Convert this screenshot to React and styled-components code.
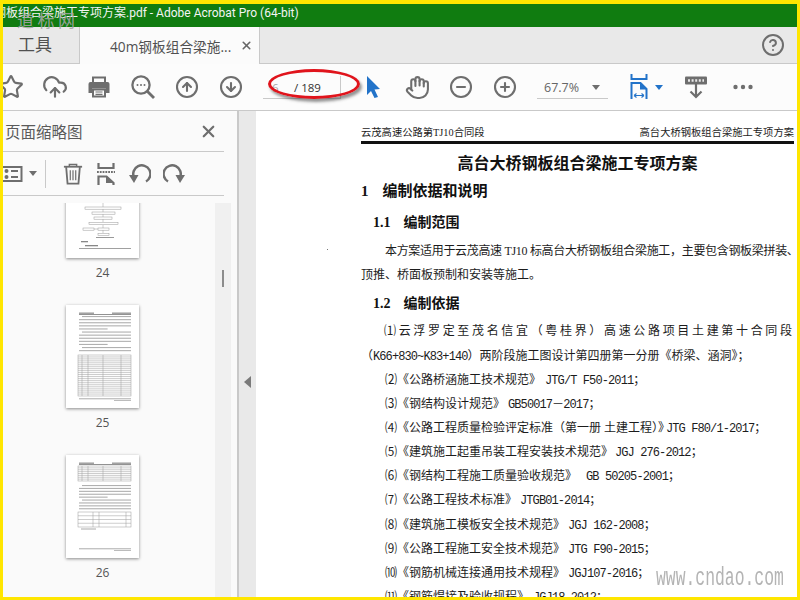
import styled, { createGlobalStyle } from "styled-components";
import {
  CircleArrowDown,
  CircleArrowUp,
  CircleHelp,
  CircleMinus,
  CirclePlus,
  CloudUpload,
  Hand,
  Star,
  X,
} from "lucide-react";

const uiFont = `"Open Sans", "Noto Sans CJK SC", sans-serif`;
const docFont = `"Liberation Serif", "Noto Sans CJK SC", serif`;
const iconGray = "#6e6e6e";
const iconBlue = "#2273c9";
const lineGray = "#c9c9c9";

const GlobalStyle = createGlobalStyle`
  html, body {
    margin: 0;
    padding: 0;
    width: 800px;
    height: 600px;
    overflow: hidden;
    background: #ffe600;
  }
`;

const Frame = styled.div`
  position: relative;
  box-sizing: border-box;
  width: 800px;
  height: 600px;
  border: solid #ffe600;
  border-width: 4px 3px 3px 3px;
  display: flex;
  flex-direction: column;
  overflow: hidden;
  font-family: ${uiFont};
  background: #fff;
`;

const TitleBar = styled.div`
  flex: 0 0 23px;
  background: #107c10;
  color: #f4f4f4;
  font-family: Roboto, "Noto Sans CJK SC", sans-serif;
  font-size: 12px;
  line-height: 18px;
  white-space: nowrap;
  overflow: hidden;
  span {
    margin-left: -9px;
    display: inline-block;
  }
`;

const TabBar = styled.div`
  flex: 0 0 37px;
  box-sizing: border-box;
  background: #e9e9e9;
  border-bottom: 1px solid ${lineGray};
  display: flex;
  align-items: stretch;
`;

const Tab = styled.div`
  box-sizing: border-box;
  width: ${(p) => p.$width}px;
  margin-bottom: ${(p) => (p.$active ? "-1px" : "0")};
  padding-left: ${(p) => p.$pad}px;
  padding-bottom: ${(p) => (p.$active ? "0" : "3px")};
  background: ${(p) => (p.$active ? "#fbfbfb" : "#e9e9e9")};
  border-right: 1px solid ${lineGray};
  color: #505050;
  font-size: ${(p) => (p.$active ? "13.7px" : "17px")};
  display: flex;
  align-items: center;
  white-space: nowrap;
`;

const TabClose = styled.span`
  display: flex;
  margin-left: 9px;
  color: #666;
`;

const HelpButton = styled.div`
  margin-left: auto;
  margin-right: 12px;
  display: flex;
  align-items: center;
  color: ${iconGray};
`;

const Toolbar = styled.div`
  flex: 0 0 46px;
  background: #fcfcfc;
  display: flex;
  align-items: center;
  margin-left: -14px;
`;

const ToolCell = styled.div`
  flex: 0 0 ${(p) => p.$width || 44}px;
  margin-left: ${(p) => p.$left || 0}px;
  height: 46px;
  display: flex;
  align-items: center;
  justify-content: center;
  color: ${(p) => (p.$blue ? iconBlue : iconGray)};
`;

const PageBox = styled.div`
  box-sizing: border-box;
  flex: 0 0 78px;
  margin-left: 10px;
  height: 23px;
  margin-top: 1px;
  border-bottom: 1px solid ${lineGray};
  border-right: 1px solid ${lineGray};
  padding-left: 9px;
  display: flex;
  align-items: center;
  font-size: 11.5px;
  color: #333;
  white-space: nowrap;
`;

const PageCurrent = styled.span`
  color: #a8a8a8;
  width: 22px;
`;

const ZoomBox = styled.div`
  box-sizing: border-box;
  flex: 0 0 71px;
  margin-left: 10px;
  height: 23px;
  margin-top: 1px;
  border-bottom: 1px solid ${lineGray};
  padding: 0 8px 0 7px;
  display: flex;
  align-items: center;
  justify-content: space-between;
  font-size: 12.5px;
  color: #666;
`;

const Caret = styled.span`
  width: 0;
  height: 0;
  border-left: 4px solid transparent;
  border-right: 4px solid transparent;
  border-top: 5px solid ${(p) => (p.$blue ? iconBlue : iconGray)};
  flex: none;
`;

const Workspace = styled.div`
  flex: 1;
  min-height: 0;
  display: flex;
  border-top: 1px solid ${lineGray};
`;

const Sidebar = styled.aside`
  flex: 0 0 234px;
  background: #fafafa;
  display: flex;
  flex-direction: column;
  min-height: 0;
  overflow: hidden;
`;

const PanelHead = styled.div`
  flex: 0 0 41px;
  width: 221px;
  border-bottom: 1px solid ${lineGray};
  display: flex;
  align-items: center;
  justify-content: space-between;
  color: #5a5a5a;
  font-size: 15.5px;
  white-space: nowrap;
  padding: 0 6px 0 2px;
  box-sizing: border-box;
`;

const PanelClose = styled.span`
  display: flex;
  color: ${iconGray};
`;

const PanelTools = styled.div`
  flex: 0 0 44px;
  box-sizing: border-box;
  width: 221px;
  border-bottom: 1px solid ${lineGray};
  display: flex;
  align-items: center;
  color: ${iconGray};
`;

const PanelDivider = styled.span`
  width: 1px;
  height: 28px;
  background: ${lineGray};
  margin: 0 17px 0 8px;
`;

const PanelTool = styled.span`
  display: flex;
  margin-right: ${(p) => p.$gap || 0}px;
`;

const ThumbArea = styled.div`
  flex: 1;
  min-height: 0;
  margin-top: 7px;
  display: flex;
  overflow: hidden;
`;

const ThumbList = styled.div`
  flex: 0 0 212px;
  box-sizing: border-box;
  margin-top: -48px;
  padding-right: 13px;
  display: flex;
  flex-direction: column;
  align-items: center;
`;

const Thumb = styled.figure`
  flex: none;
  margin: 0 0 13px;
  height: 137px;
  display: flex;
  flex-direction: column;
  align-items: center;
  svg {
    background: #fff;
    box-shadow: 0 1px 3px rgba(0, 0, 0, 0.45);
  }
  svg > * {
    filter: blur(0.4px);
  }
  figcaption {
    margin-top: 7px;
    font-size: 12px;
    line-height: 15px;
    color: #555;
  }
`;

const ScrollTrack = styled.div`
  width: 16px;
  background: #f0f0f0;
  display: flex;
  justify-content: center;
  padding-top: 67px;
`;

const ScrollThumb = styled.div`
  width: 2px;
  height: 17px;
  background: #8c8c8c;
`;

const Splitter = styled.div`
  box-sizing: border-box;
  flex: 0 0 19px;
  background: #e9e9e9;
  border-left: 2px solid ${lineGray};
  display: flex;
  align-items: center;
  padding-left: 5px;
  span {
    width: 0;
    height: 0;
    margin-top: 56px;
    border-top: 6px solid transparent;
    border-bottom: 6px solid transparent;
    border-right: 7px solid #7a7a7a;
  }
`;

const Document = styled.main`
  flex: 1;
  min-width: 0;
  background: #fff;
  padding: 15px 3px 0 105px;
  overflow: hidden;
  color: #1c1c1c;
  font-family: ${docFont};
`;

const DocHeader = styled.div`
  display: flex;
  justify-content: space-between;
  font-size: 10.3px;
  line-height: 14px;
  padding-bottom: 1px;
  border-bottom: 3px solid #111;
`;

const DocTitle = styled.h1`
  margin: 9px 0 0;
  font-size: 16px;
  line-height: 22px;
  text-align: center;
  color: #111;
`;

const SectionTitle = styled.h2`
  margin: ${(p) => p.$top}px 0 0 ${(p) => p.$indent}px;
  font-size: ${(p) => p.$size}px;
  line-height: 20px;
  display: flex;
  gap: ${(p) => p.$gap}px;
  color: #111;
`;

const Para = styled.p`
  margin: ${(p) => p.$top || 0}px 0 0;
  font-size: 12px;
  line-height: 25px;
  height: ${(p) => p.$height || 25}px;
  white-space: nowrap;
  text-indent: ${(p) => p.$indent || 0}px;
  letter-spacing: ${(p) => p.$spacing || 0}px;
`;

const JustifiedPara = styled(Para)`
  white-space: normal;
  text-align: justify;
  text-align-last: justify;
`;

const Code = styled.span`
  font-family: "Liberation Mono", "Noto Sans CJK SC", monospace;
  font-size: 12px;
  letter-spacing: -0.9px;
  line-height: 1;
  margin-left: ${(p) => p.$gap || 0}px;
`;

const RefList = styled.div`
  margin-top: -0.5px;
`;

const RefRow = styled.div`
  font-size: 12px;
  line-height: 24.1px;
  height: 24.1px;
  white-space: pre;
  padding-left: 24px;
`;

const RedEllipse = styled.div`
  position: absolute;
  left: 265px;
  top: 65px;
  width: 86px;
  height: 24px;
  border-radius: 50%;
  border: 3px solid #e0141c;
  box-shadow: 2px 3px 3px rgba(60, 60, 60, 0.55);
  pointer-events: none;
`;

const TopMark = styled.div`
  position: absolute;
  left: 14px;
  top: 8px;
  font-family: ${docFont};
  font-size: 17px;
  line-height: 20px;
  letter-spacing: 3.5px;
  color: rgba(165, 165, 165, 0.9);
`;

const BottomMark = styled.div`
  position: absolute;
  left: 653px;
  top: 564px;
  font-family: "Liberation Mono", monospace;
  font-size: 16.4px;
  line-height: 22px;
  color: #b4b4b4;
  transform: scaleY(1.55);
`;

const Speck = styled.span`
  position: absolute;
  left: 324px;
  top: 245px;
  width: 1px;
  height: 1px;
  background: #777;
`;

const CursorIcon = () => (
  <svg width="16" height="24" viewBox="0 0 16 24">
    <path d="M2 1 L15 14 L9.5 14.5 L13 22 L9.5 23 L6 16 L2 20 Z" fill={iconBlue} />
  </svg>
);

const PrinterIcon = () => (
  <svg width="24" height="24" viewBox="0 0 24 24" fill="none">
    <path d="M6 2.5 H18 V8 H6 Z" stroke={iconGray} strokeWidth="2" />
    <path
      d="M3.5 7 H20.5 A2 2 0 0 1 22.5 9 V18 H19 V13.5 H5 V18 H1.5 V9 A2 2 0 0 1 3.5 7 Z"
      fill={iconGray}
    />
    <path d="M6 14.5 H18 V21.5 H6 Z" stroke={iconGray} strokeWidth="2" />
    <path d="M8.5 17 H15.5 M8.5 19.3 H15.5" stroke={iconGray} strokeWidth="1.2" />
  </svg>
);

const SearchDotsIcon = () => (
  <svg width="26" height="26" viewBox="0 0 26 26" fill="none" stroke={iconGray}>
    <circle cx="11" cy="11" r="8.6" strokeWidth="2.3" />
    <path d="M17 17 L24 24" strokeWidth="2.8" />
    <circle cx="7.5" cy="11" r="1" fill={iconGray} stroke="none" />
    <circle cx="11" cy="11" r="1" fill={iconGray} stroke="none" />
    <circle cx="14.5" cy="11" r="1" fill={iconGray} stroke="none" />
  </svg>
);

const FitWidthIcon = () => (
  <svg width="18" height="26" viewBox="0 0 18 26" fill="none">
    <path d="M1.5 0 V5 H16.5 V0" stroke={iconBlue} strokeWidth="2" />
    <path d="M1.5 25 V9 H10.5 L16.5 15 V25" stroke={iconBlue} strokeWidth="2" />
    <path d="M10 9 L10 15.5 H16.5 Z" fill={iconBlue} />
    <path
      d="M4 21.5 H14 M4 21.5 L6.5 19.5 M4 21.5 L6.5 23.5 M14 21.5 L11.5 19.5 M14 21.5 L11.5 23.5"
      stroke={iconBlue}
      strokeWidth="1.1"
    />
  </svg>
);

const KeyboardDownIcon = () => (
  <svg width="24" height="24" viewBox="0 0 24 24" fill="none">
    <rect x="1" y="1.5" width="22" height="8" rx="1" fill={iconGray} />
    <path d="M4 5.5 H20" stroke="#e8e8e8" strokeWidth="2.4" strokeDasharray="2 1.6" />
    <path d="M12 9 V22 M6.5 16.5 L12 22 L17.5 16.5" stroke={iconGray} strokeWidth="2.2" />
  </svg>
);

const DotsIcon = () => (
  <svg width="20" height="6" viewBox="0 0 20 6" fill={iconGray}>
    <circle cx="2.5" cy="3" r="2.2" />
    <circle cx="10" cy="3" r="2.2" />
    <circle cx="17.5" cy="3" r="2.2" />
  </svg>
);

const ListIcon = () => (
  <svg width="20" height="18" viewBox="0 0 20 18" fill="none">
    <path d="M0 2 H18.5 V16 H0" stroke={iconGray} strokeWidth="2" />
    <circle cx="3.5" cy="6" r="2" fill={iconGray} />
    <circle cx="3.5" cy="12" r="2" fill={iconGray} />
    <path d="M8 6 H15 M8 12 H15" stroke={iconGray} strokeWidth="2" />
  </svg>
);

const TrashIcon = () => (
  <svg width="20" height="24" viewBox="0 0 22 24" fill="none" stroke={iconGray}>
    <path d="M1 4 H21" strokeWidth="2" />
    <path d="M7 4 V1.5 H15 V4" strokeWidth="1.6" />
    <path d="M3.5 4.5 L5 22.5 H17 L18.5 4.5" strokeWidth="2" />
    <path d="M8 8 V19 M11 8 V19 M14 8 V19" strokeWidth="1.3" />
  </svg>
);

const CutPageIcon = () => (
  <svg width="18" height="22" viewBox="0 0 18 22" fill="none">
    <path d="M1.5 0 V5 H16.5 V0" stroke={iconGray} strokeWidth="2.2" />
    <path d="M0 9 H18" stroke={iconGray} strokeWidth="1.8" strokeDasharray="1.8 1" />
    <path d="M1.5 22 V13.5 H9.5 L16.5 20 V22" stroke={iconGray} strokeWidth="2.2" />
    <path d="M9 13 V20 H17 Z" fill={iconGray} />
  </svg>
);

const RotateIcon = ({ flip }) => (
  <svg
    width="22"
    height="22"
    viewBox="0 0 22 22"
    fill="none"
    style={flip ? { transform: "scaleX(-1)" } : undefined}
  >
    <path d="M5 14.5 A8.6 8.6 0 1 1 17 18.5" stroke={iconGray} strokeWidth="2.5" />
    <path d="M0 12 H9.5 L5 20 Z" fill={iconGray} />
  </svg>
);

// tiny greyed-out page previews, a blurred text line is just a thin rect
const textLines = (from, count, step = 3.1, x = 13, w = 52) =>
  Array.from({ length: count }, (_, i) => ({
    x: i % 5 === 0 ? x + 3 : x,
    y: from + i * step,
    w: i % 5 === 4 ? w * 0.55 : i % 5 === 0 ? w - 3 : w,
  }));

const PageLines = ({ lines }) => (
  <g>
    {lines.map((l, i) => (
      <rect key={i} x={l.x} y={l.y} width={l.w} height="1.1" fill="#b0b0b0" />
    ))}
  </g>
);

const PageChrome = () => (
  <g>
    <rect x="13" y="7.5" width="15" height="1.4" fill="#999" />
    <rect x="46" y="7.5" width="19" height="1.4" fill="#999" />
    <rect x="13" y="9.2" width="52" height="0.8" fill="#777" />
    <rect x="13" y="93.5" width="52" height="0.7" fill="#888" />
    <rect x="48" y="95" width="17" height="1" fill="#bbb" />
  </g>
);

const GridTable = ({ y, height, rows, cols }) => (
  <g stroke="#9a9a9a" strokeWidth="0.5" fill="none">
    <rect x="12" y={y} width="53" height={height} />
    {Array.from({ length: rows }, (_, i) => (
      <line
        key={i}
        x1="12"
        x2="65"
        y1={y + ((i + 1) * height) / (rows + 1)}
        y2={y + ((i + 1) * height) / (rows + 1)}
      />
    ))}
    {cols.map((c) => (
      <line key={c} x1={c} x2={c} y1={y} y2={y + height} />
    ))}
  </g>
);

const flowBoxes = [
  [19, 52, 36, 2.2],
  [26, 57, 23, 2.2],
  [28, 62, 18, 2.2],
  [23, 67.5, 29, 2.2],
  [17, 73, 11, 2.2],
  [32, 73, 11, 2.2],
  [32, 78.5, 11, 2.2],
];

const Page24 = () => (
  <svg width="73" height="103" viewBox="0 0 73 103">
    <g fill="none" stroke="#999" strokeWidth="0.5">
      <rect x="19" y="47" width="36" height="0.4" />
      {flowBoxes.map(([x, y, w, h]) => (
        <rect key={`${x}-${y}`} x={x} y={y} width={w} height={h} />
      ))}
      <path d="M37 48 V52 M37 54 V57 M37 59 V62 M37 64 V67 M37 70 V73 M28 74 H32 M37 75 V78" />
    </g>
    <rect x="30" y="82" width="18" height="1" fill="#999" />
    <rect x="15" y="86" width="7" height="1.3" fill="#888" />
    <rect x="19" y="90" width="13" height="1.3" fill="#888" />
    <rect x="13" y="93" width="52" height="0.7" fill="#777" />
  </svg>
);

const Page25 = () => (
  <svg width="73" height="103" viewBox="0 0 73 103">
    <PageChrome />
    <PageLines lines={textLines(11, 12)} />
    <GridTable y={50} height={41} rows={20} cols={[16, 22, 37, 55]} />
  </svg>
);

const Page26 = () => (
  <svg width="73" height="103" viewBox="0 0 73 103">
    <PageChrome />
    <GridTable y={11} height={15} rows={7} cols={[16, 22, 37, 55]} />
    <PageLines lines={textLines(30, 9, 2.9)} />
    <GridTable y={57} height={15} rows={3} cols={[27, 33, 60]} />
    <rect x="15" y="73.5" width="15" height="1" fill="#aaa" />
  </svg>
);

const references = [
  { cite: "⑵《公路桥涵施工技术规范》", code: "JTG/T F50-2011", gap: 4 },
  { cite: "⑶《钢结构设计规范》", code: "GB50017－2017", gap: 3 },
  { cite: "⑷《公路工程质量检验评定标准（第一册 土建工程）》", code: "JTG F80/1-2017", gap: -4 },
  { cite: "⑸《建筑施工起重吊装工程安装技术规范》", code: "JGJ 276-2012", gap: 2 },
  { cite: "⑹《钢结构工程施工质量验收规范》", code: "GB 50205-2001", gap: 9 },
  { cite: "⑺《公路工程技术标准》", code: "JTGB01-2014", gap: 3 },
  { cite: "⑻《建筑施工模板安全技术规范》", code: "JGJ 162-2008", gap: 3 },
  { cite: "⑼《公路工程施工安全技术规范》", code: "JTG F90-2015", gap: 3 },
  { cite: "⑽《钢筋机械连接通用技术规程》", code: "JGJ107-2016", gap: 3 },
  { cite: "⑾《钢筋焊接及验收规程》", code: "JGJ18-2012", gap: 4 },
];

const App = () => {
  return (
    <Frame>
      <GlobalStyle />
      <TitleBar>
        <span>钢板组合梁施工专项方案.pdf - Adobe Acrobat Pro (64-bit)</span>
      </TitleBar>

      <TabBar>
        <Tab $width={77} $pad={15}>工具</Tab>
        <Tab $width={180} $pad={30} $active>
          40m钢板组合梁施...
          <TabClose><X size={13} strokeWidth={3} /></TabClose>
        </Tab>
        <HelpButton><CircleHelp size={24} strokeWidth={2} /></HelpButton>
      </TabBar>

      <Toolbar>
        <ToolCell><Star size={26} strokeWidth={2} /></ToolCell>
        <ToolCell><CloudUpload size={26} strokeWidth={2} /></ToolCell>
        <ToolCell><PrinterIcon /></ToolCell>
        <ToolCell><SearchDotsIcon /></ToolCell>
        <ToolCell><CircleArrowUp size={24} strokeWidth={2.1} /></ToolCell>
        <ToolCell><CircleArrowDown size={24} strokeWidth={2.1} /></ToolCell>
        <PageBox>
          <PageCurrent>6</PageCurrent>/ 189
        </PageBox>
        <ToolCell $left={10} $blue><CursorIcon /></ToolCell>
        <ToolCell><Hand size={25} strokeWidth={2} /></ToolCell>
        <ToolCell><CircleMinus size={24} strokeWidth={2.1} /></ToolCell>
        <ToolCell><CirclePlus size={24} strokeWidth={2.1} /></ToolCell>
        <ZoomBox>
          67.7%
          <Caret />
        </ZoomBox>
        <ToolCell $left={17} $width={28}><FitWidthIcon /></ToolCell>
        <ToolCell $width={11}><Caret $blue /></ToolCell>
        <ToolCell $left={10}><KeyboardDownIcon /></ToolCell>
        <ToolCell $left={3}><DotsIcon /></ToolCell>
      </Toolbar>

      <Workspace>
        <Sidebar>
          <PanelHead>
            页面缩略图
            <PanelClose><X size={19} strokeWidth={2.8} /></PanelClose>
          </PanelHead>
          <PanelTools>
            <PanelTool $gap={6}><ListIcon /></PanelTool>
            <Caret />
            <PanelDivider />
            <PanelTool $gap={14}><TrashIcon /></PanelTool>
            <PanelTool $gap={14}><CutPageIcon /></PanelTool>
            <PanelTool $gap={12}><RotateIcon /></PanelTool>
            <PanelTool><RotateIcon flip /></PanelTool>
          </PanelTools>
          <ThumbArea>
            <ThumbList>
              <Thumb><Page24 /><figcaption>24</figcaption></Thumb>
              <Thumb><Page25 /><figcaption>25</figcaption></Thumb>
              <Thumb><Page26 /><figcaption>26</figcaption></Thumb>
            </ThumbList>
            <ScrollTrack><ScrollThumb /></ScrollTrack>
          </ThumbArea>
        </Sidebar>

        <Splitter><span /></Splitter>

        <Document>
          <DocHeader>
            <span>云茂高速公路第TJ10合同段</span>
            <span>高台大桥钢板组合梁施工专项方案</span>
          </DocHeader>
          <DocTitle>高台大桥钢板组合梁施工专项方案</DocTitle>
          <SectionTitle $top={6} $indent={0} $size={15} $gap={14}>
            <span>1</span>
            <span>编制依据和说明</span>
          </SectionTitle>
          <SectionTitle $top={12} $indent={12} $size={14} $gap={13}>
            <span>1.1</span>
            <span>编制范围</span>
          </SectionTitle>
          <Para $indent={24} $top={6} $spacing={-0.32} $height={24}>
            本方案适用于云茂高速 TJ10 标高台大桥钢板组合梁施工，主要包含钢板梁拼装、
          </Para>
          <Para>顶推、桥面板预制和安装等施工。</Para>
          <SectionTitle $top={6} $indent={12} $size={14} $gap={13}>
            <span>1.2</span>
            <span>编制依据</span>
          </SectionTitle>
          <RefList>
            <JustifiedPara $indent={23} $top={5} $spacing={2}>
              ⑴云浮罗定至茂名信宜（粤桂界）高速公路项目土建第十合同段
            </JustifiedPara>
            <Para $height={24.5}>（<Code>K66+830~K83+140</Code>）两阶段施工图设计第四册第一分册《桥梁、涵洞》；</Para>
            {references.map((r) => (
              <RefRow key={r.code}>
                {r.cite}
                <Code $gap={r.gap}>{r.code}</Code>；
              </RefRow>
            ))}
          </RefList>
        </Document>
      </Workspace>

      <RedEllipse />
      <Speck />
      <TopMark>道标网</TopMark>
      <BottomMark>www.cndao.com</BottomMark>
    </Frame>
  );
};

export default App;
